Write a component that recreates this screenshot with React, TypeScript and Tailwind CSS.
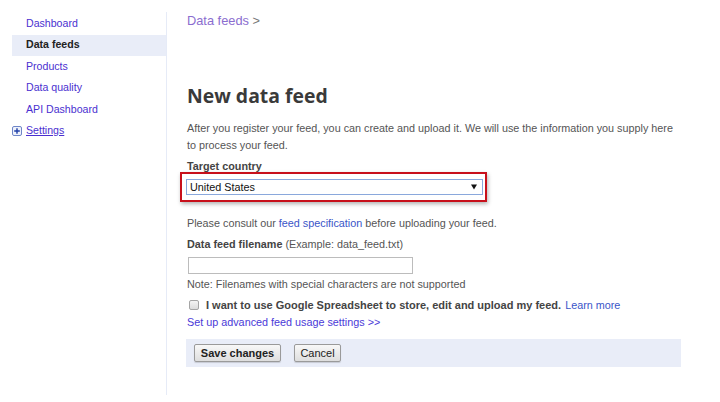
import React from "react";

const navLink = "text-[#4a30d0]";

export default function App() {
  return (
    <div className="w-[720px] h-[402px] bg-white flex overflow-hidden text-[10.8px] text-[#444]" style={{ fontFamily: '"Liberation Sans", Arial, sans-serif' }}>
      {/* Sidebar */}
      <div className="w-[167px] shrink-0 mt-[12px] h-[383px] border-r border-[#e6ebf7] pl-[12px] pt-[1px] flex flex-col text-[10.6px]">
        <div className={`h-[21.5px] flex items-center pl-[14px] ${navLink}`}>Dashboard</div>
        <div className="h-[21.5px] flex items-center pl-[14px] bg-[#e9edf8] font-bold text-[#222]">Data feeds</div>
        <div className={`h-[21.5px] flex items-center pl-[14px] ${navLink}`}>Products</div>
        <div className={`h-[21.5px] flex items-center pl-[14px] ${navLink}`}>Data quality</div>
        <div className={`h-[21.5px] flex items-center pl-[14px] ${navLink}`}>API Dashboard</div>
        <div className={`h-[21.5px] flex items-center ${navLink}`}>
          <span className="w-[10px] h-[10px] mr-[4px] border border-[#6f86c8] rounded-[2px] bg-[#eef2fb] flex items-center justify-center">
            <svg width="8" height="8" viewBox="0 0 8 8">
              <path d="M4 1.2V6.8M1.2 4H6.8" stroke="#1f3fa8" strokeWidth="1.4" />
            </svg>
          </span>
          <span className="underline">Settings</span>
        </div>
      </div>

      {/* Main */}
      <div className="flex-1 pl-[20px] flex flex-col">
        <div className="mt-[13px] leading-[16px] text-[12.8px] text-[#8b6dcf]">
          Data feeds <span className="text-[#777]">&gt;</span>
        </div>
        <h1 className="mt-[53px] leading-[28px] text-[19.4px] font-bold text-[#3a3a3a]" style={{ fontFamily: '"Open Sans", sans-serif' }}>
          New data feed
        </h1>
        <p className="mt-[9.5px] leading-[17px] text-[#555] whitespace-nowrap">
          After you register your feed, you can create and upload it. We will use the information you supply here
          <br />
          to process your feed.
        </p>
        <div className="mt-[5px] leading-[14px] font-bold text-[#444]">Target country</div>
        <div className="-mt-px -ml-[7px] w-[307px] h-[30px] border-2 border-[#c8101b] shadow-[1px_2px_4px_rgba(0,0,0,0.3)] flex items-center pl-[4px] pt-[1px]">
          <div className="w-[297px] h-[16px] border border-[#8aa8dc] bg-white flex items-center justify-between pl-[3px] pr-[5px] text-[#111]">
            <span className="leading-[14px]">United States</span>
            <svg width="6" height="6" viewBox="0 0 7 6">
              <path d="M0 0H7L3.5 6Z" fill="#111" />
            </svg>
          </div>
        </div>
        <div className="mt-[14px] leading-[15px] text-[#555] whitespace-nowrap">
          Please consult our <span className="text-[#3a55c8]">feed specification</span> before uploading your feed.
        </div>
        <div className="mt-[6px] leading-[15px] text-[#555]">
          <span className="font-bold text-[#444]">Data feed filename</span> (Example: data_feed.txt)
        </div>
        <div className="mt-[5px] ml-px w-[225px] h-[17px] border border-[#bcbcbc] bg-white" />
        <div className="mt-[3.5px] leading-[15px] text-[#555]">Note: Filenames with special characters are not supported</div>
        <div className="mt-[5.5px] leading-[15px] flex items-center whitespace-nowrap">
          <span className="ml-[2px] w-[10px] h-[10px] border border-[#a5a5a5] rounded-[2px] bg-gradient-to-b from-[#f4f4f4] to-[#dcdcdc]" />
          <span className="ml-[7px] font-bold text-[#444] text-[11px]">I want to use Google Spreadsheet to store, edit and upload my feed.</span>
          <span className="ml-[4px] text-[#3a55c8]">Learn more</span>
        </div>
        <div className="mt-[2px] leading-[15px] text-[#4a3ad8]">Set up advanced feed usage settings &gt;&gt;</div>
        <div className="mt-[9px] -ml-px w-[495px] h-[28px] bg-[#e9edf8] flex items-center pl-[8px] gap-[13px]">
          <button className="h-[18px] w-[87px] border border-[#9a9a9a] rounded-[2px] bg-gradient-to-b from-[#f8f8f8] to-[#dedede] font-bold text-[#222] text-[11px] leading-[16px] shadow-[0_1px_1px_rgba(0,0,0,0.15)]">
            Save changes
          </button>
          <button className="h-[18px] w-[47px] border border-[#9a9a9a] rounded-[2px] bg-gradient-to-b from-[#f8f8f8] to-[#dedede] text-[#222] text-[11px] leading-[16px] shadow-[0_1px_1px_rgba(0,0,0,0.15)]">
            Cancel
          </button>
        </div>
      </div>
    </div>
  );
}
